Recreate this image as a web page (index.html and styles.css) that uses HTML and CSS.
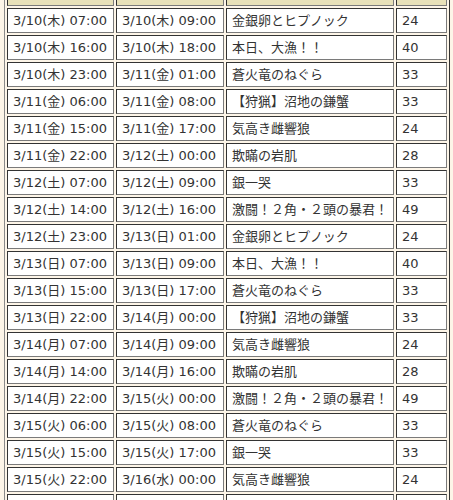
FILE: index.html
```html
<!DOCTYPE html>
<html lang="ja">
<head>
<meta charset="utf-8">
<link rel="stylesheet" href="styles.css">
</head>
<body>
<table class="schedule">
<colgroup><col class="c1"><col class="c2"><col class="c3"><col class="c4"></colgroup>
<thead><tr><th>&nbsp;</th><th>&nbsp;</th><th>&nbsp;</th><th>&nbsp;</th></tr></thead>
<tbody>
<tr><td>3/10(木) 07:00</td><td>3/10(木) 09:00</td><td>金銀卵とヒプノック</td><td>24</td></tr>
<tr><td>3/10(木) 16:00</td><td>3/10(木) 18:00</td><td>本日、大漁！！</td><td>40</td></tr>
<tr><td>3/10(木) 23:00</td><td>3/11(金) 01:00</td><td>蒼火竜のねぐら</td><td>33</td></tr>
<tr><td>3/11(金) 06:00</td><td>3/11(金) 08:00</td><td>【狩猟】沼地の鎌蟹</td><td>33</td></tr>
<tr><td>3/11(金) 15:00</td><td>3/11(金) 17:00</td><td>気高き雌響狼</td><td>24</td></tr>
<tr><td>3/11(金) 22:00</td><td>3/12(土) 00:00</td><td>欺瞞の岩肌</td><td>28</td></tr>
<tr><td>3/12(土) 07:00</td><td>3/12(土) 09:00</td><td>銀一哭</td><td>33</td></tr>
<tr><td>3/12(土) 14:00</td><td>3/12(土) 16:00</td><td>激闘！２角・２頭の暴君！</td><td>49</td></tr>
<tr><td>3/12(土) 23:00</td><td>3/13(日) 01:00</td><td>金銀卵とヒプノック</td><td>24</td></tr>
<tr><td>3/13(日) 07:00</td><td>3/13(日) 09:00</td><td>本日、大漁！！</td><td>40</td></tr>
<tr><td>3/13(日) 15:00</td><td>3/13(日) 17:00</td><td>蒼火竜のねぐら</td><td>33</td></tr>
<tr><td>3/13(日) 22:00</td><td>3/14(月) 00:00</td><td>【狩猟】沼地の鎌蟹</td><td>33</td></tr>
<tr><td>3/14(月) 07:00</td><td>3/14(月) 09:00</td><td>気高き雌響狼</td><td>24</td></tr>
<tr><td>3/14(月) 14:00</td><td>3/14(月) 16:00</td><td>欺瞞の岩肌</td><td>28</td></tr>
<tr><td>3/14(月) 22:00</td><td>3/15(火) 00:00</td><td>激闘！２角・２頭の暴君！</td><td>49</td></tr>
<tr><td>3/15(火) 06:00</td><td>3/15(火) 08:00</td><td>蒼火竜のねぐら</td><td>33</td></tr>
<tr><td>3/15(火) 15:00</td><td>3/15(火) 17:00</td><td>銀一哭</td><td>33</td></tr>
<tr><td>3/15(火) 22:00</td><td>3/16(水) 00:00</td><td>気高き雌響狼</td><td>24</td></tr>
<tr><td>&nbsp;</td><td>&nbsp;</td><td>&nbsp;</td><td>&nbsp;</td></tr>
</tbody>
</table>
</body>
</html>
```
FILE: styles.css
```css
html, body {
  margin: 0;
  padding: 0;
  background: #fdf5e8;
  overflow: hidden;
}
body {
  font-family: "DejaVu Sans", "Noto Sans CJK JP", sans-serif;
  font-size: 13px;
  color: #333;
}
.schedule {
  margin: -22px 0 0 4px;
  width: 446px;
  table-layout: fixed;
  border-collapse: separate;
  border-spacing: 2px;
  border: 1px solid;
  border-color: #8a8a8a #333 #333 #8a8a8a;
}
.c1 { width: 107px; }
.c2 { width: 108px; }
.c3 { width: 168px; }
.c4 { width: 51px; }
.schedule th,
.schedule td {
  box-sizing: border-box;
  height: 25px;
  padding: 3px 5px;
  line-height: 17px;
  border: 1px solid;
  border-color: #333 #7a7a7a #7a7a7a #333;
  text-align: left;
  white-space: nowrap;
  overflow: hidden;
  font-weight: normal;
}
.schedule th {
  background: #e8e1b9;
}
.schedule td {
  background: #fff;
}
```
